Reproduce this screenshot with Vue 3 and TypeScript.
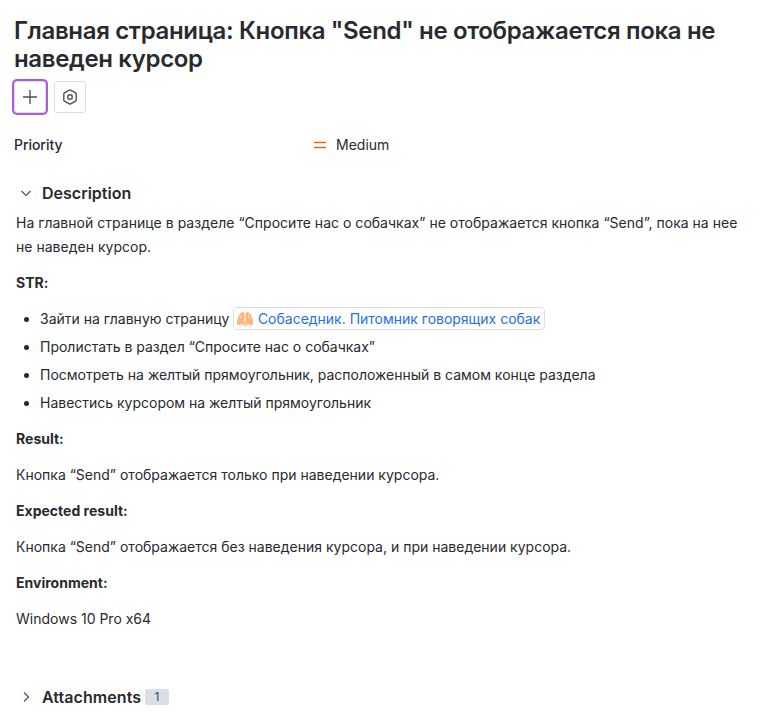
<script setup lang="ts">
const steps: string[] = [
  'Пролистать в раздел “Спросите нас о собачках”',
  'Посмотреть на желтый прямоугольник, расположенный в самом конце раздела',
  'Навестись курсором на желтый прямоугольник',
]
</script>

<template>
  <main class="issue">
    <h1>Главная страница: Кнопка "Send" не отображается пока не наведен курсор</h1>
    <div class="actions">
      <button class="btn focused" aria-label="Add">
        <svg width="16" height="16" viewBox="0 0 16 16"><path d="M8 1v14M1 8h14" /></svg>
      </button>
      <button class="btn" aria-label="Apps">
        <svg width="16" height="16" viewBox="0 0 16 16"><path d="M7.400 1.100Q8 .7 8.600 1.100L13.600 3.900Q14.200 4.300 14.200 4.900V11.100Q14.200 11.700 13.600 12.100L8.600 14.900Q8 15.300 7.400 14.900L2.400 12.100Q1.800 11.700 1.800 11.100V4.900Q1.800 4.300 2.400 3.900Z" /><circle cx="8" cy="8" r="2.300" /></svg>
      </button>
    </div>
    <div class="field">
      <span class="label">Priority</span>
      <svg width="16" height="16" viewBox="0 0 16 16"><path d="M2 5.500h12M2 10.500h12" /></svg>
      <span class="value">Medium</span>
    </div>
    <h2 class="heading">
      <svg width="16" height="16" viewBox="0 0 16 16"><path d="m3.500 6 4.500 4.500L12.500 6" /></svg>
      <span>Description</span>
    </h2>
    <section class="body">
      <p class="intro">На главной странице в разделе “Спросите нас о собачках” не отображается кнопка “Send”, пока на нее не наведен курсор.</p>
      <p><b>STR:</b></p>
      <ul>
        <li>Зайти на главную страницу <a class="card"><svg width="16" height="16" viewBox="0 0 16 16"><path d="M.3 14.500 0 10 1 6.500 3 2.500 5 1 7.300 1.700 7.600 5 7 10 5.500 14.500 4 12.500 3.500 14.800 2 13.500ZM15.700 14.500 16 10 15 6.500 13 2.500 11 1 8.700 1.700 8.400 5 9 10 10.500 14.500 12 12.500 12.500 14.800 14 13.500Z" /><path d="M8 9 10 12.500 9 15.300H7L6 12.500Z" /><path class="fold" d="M4.500 3.500 3 7.500M11.500 3.500 13 7.500M8 10.500V12M7 13.500h2" /></svg><span>Собаседник. Питомник говорящих собак</span></a></li>
        <li v-for="s in steps" :key="s">{{ s }}</li>
      </ul>
      <p><b>Result:</b></p>
      <p>Кнопка “Send” отображается только при наведении курсора.</p>
      <p><b>Expected result:</b></p>
      <p>Кнопка “Send” отображается без наведения курсора, и при наведении курсора.</p>
      <p><b>Environment:</b></p>
      <p>Windows 10 Pro x64</p>
    </section>
    <h2 class="heading attachments">
      <svg width="16" height="16" viewBox="0 0 16 16"><path d="m6 3.500 4.500 4.500L6 12.500" /></svg>
      <span>Attachments</span>
      <span class="badge">1</span>
    </h2>
  </main>
</template>

<style>
body { background: #fff; }
</style>

<style scoped>
.issue { box-sizing: border-box; height: 726px; overflow: hidden; padding: 17px 14px 0; font: 14px/24px Inter, sans-serif; color: #292a2e; }
h1 { margin: 0; font-size: 24px; line-height: 28px; font-weight: 600; letter-spacing: -0.34px; }
svg { fill: none; stroke: #505258; stroke-width: 1.4; flex: none; }
.actions { display: flex; gap: 8px; margin-top: 8px; }
.btn { box-sizing: border-box; width: 32px; height: 32px; padding: 0; border: 1px solid #dddee1; border-radius: 3px; background: #fff; display: grid; place-items: center; }
.focused { box-shadow: 0 0 0 2px #af59e1; }
.field { display: flex; align-items: center; height: 24px; margin-top: 20px; }
.label { width: 298px; font-weight: 500; letter-spacing: -0.05px; }
.field svg { stroke: #e56910; stroke-width: 1.7; }
.value { margin-left: 8px; }
.heading { display: flex; align-items: center; height: 24px; margin: 24px 0 0; padding-left: 4px; font-size: 16px; font-weight: 600; }
.heading svg { margin-right: 8px; stroke-width: 1.2; }
.body { padding: 6px 2px 0; }
p { margin: 0 0 12px; }
.intro { letter-spacing: 0.02px; }
ul { margin: 0 0 12px; padding-left: 24px; }
li { margin-bottom: 4px; letter-spacing: -0.01px; }
b { font-weight: 650; letter-spacing: 0.01px; }
.card { display: inline-flex; align-items: center; box-sizing: border-box; height: 23px; padding: 0 4px 0 3px; border: 1px solid #dddee1; border-radius: 4px; color: #2671df; vertical-align: top; }
.card svg { fill: #ffb579; stroke: none; margin-right: 4.500px; }
.card .fold { stroke: #fff0e2; stroke-width: 0.7; }
.attachments { margin-top: 54px; letter-spacing: 0.06px; }
.badge { margin-left: 4px; width: 24px; height: 16px; border-radius: 2px; background: #dddee1; color: #1c4b85; font: 400 12px/16px Inter, sans-serif; text-align: center; }
</style>
